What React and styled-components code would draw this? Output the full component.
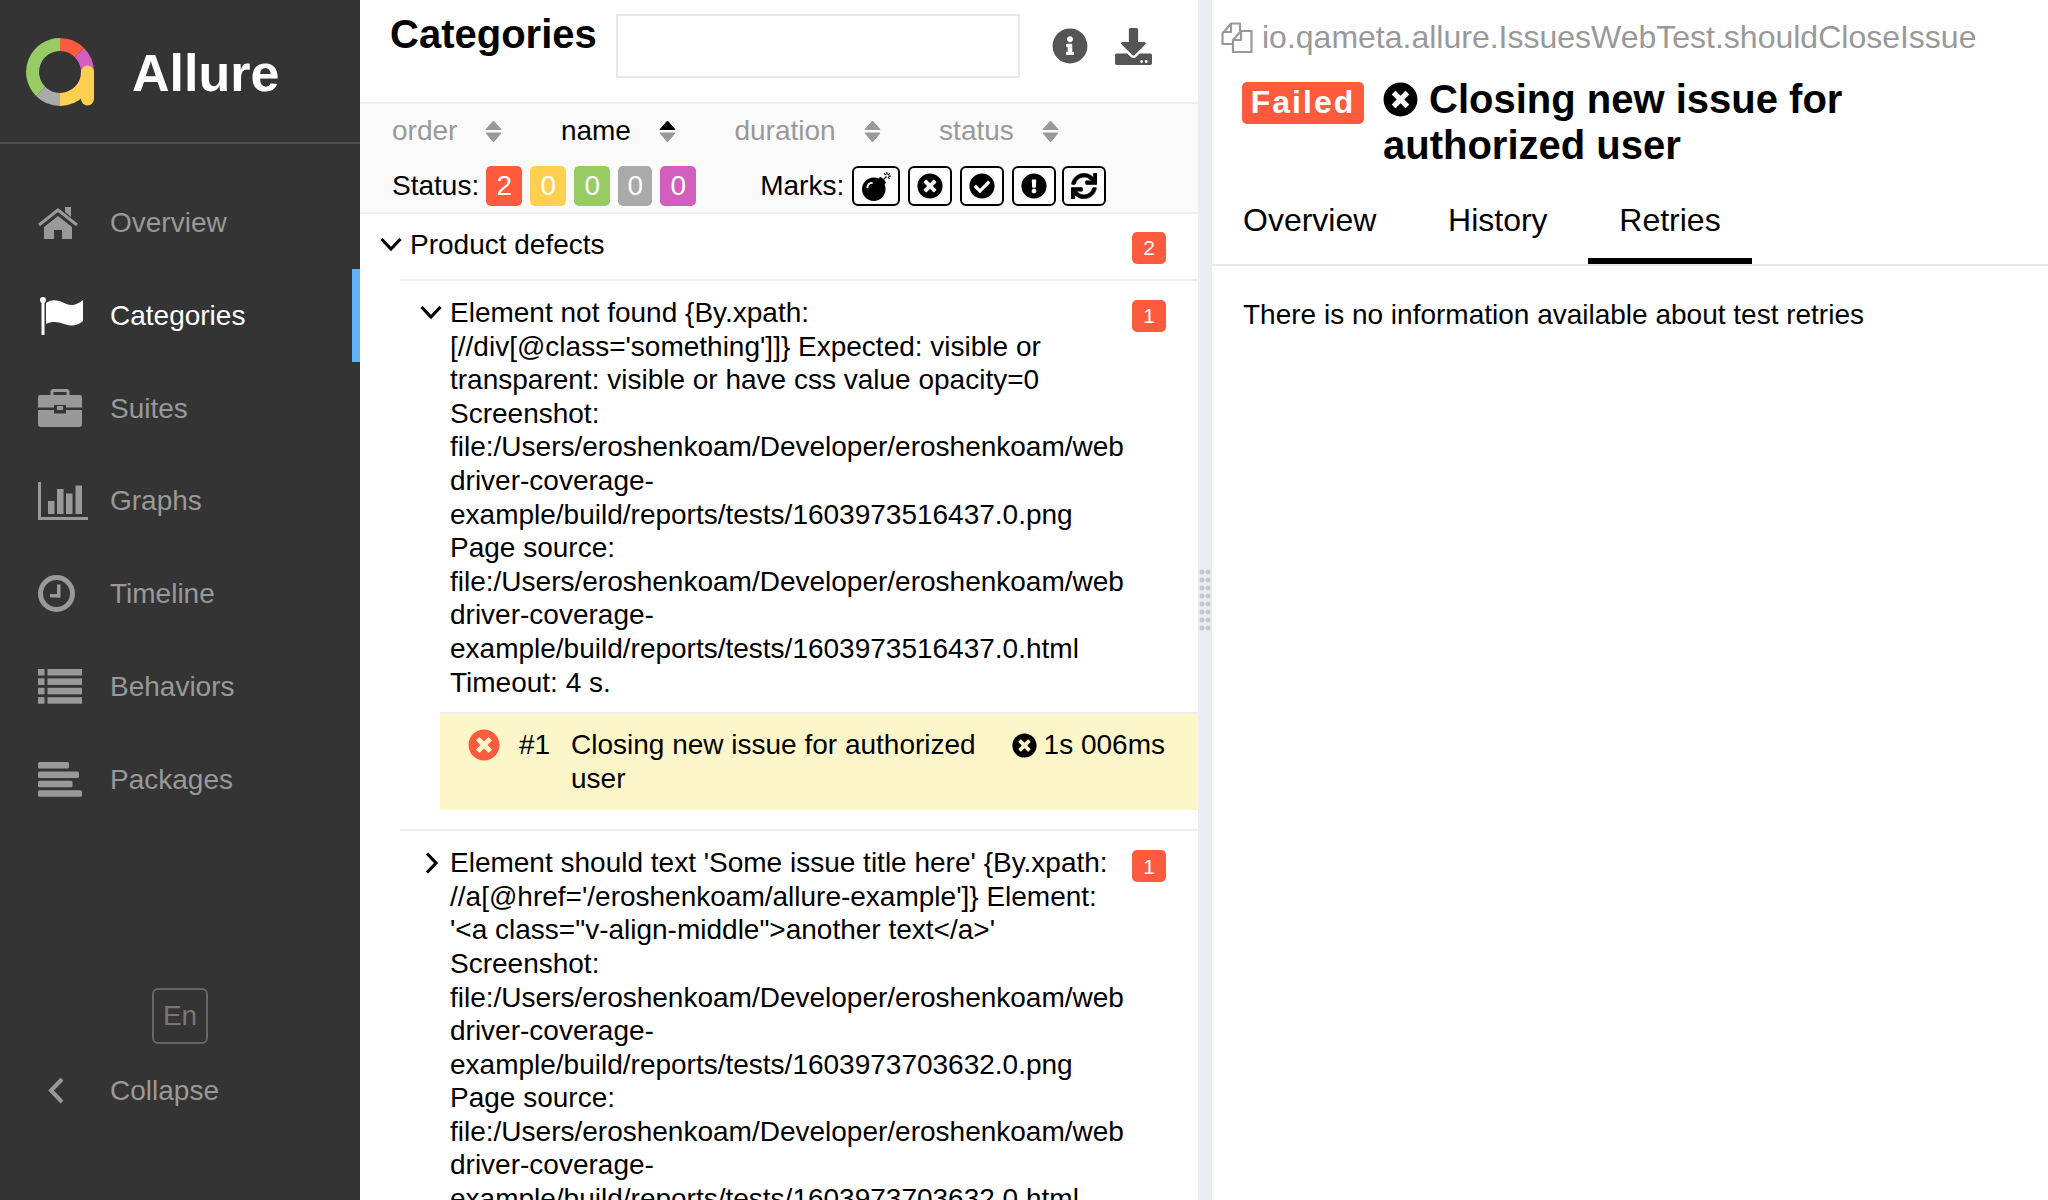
import React from "react";
import styled, { createGlobalStyle } from "styled-components";
import {
  FaBomb,
  FaCheckCircle,
  FaDownload,
  FaExclamationCircle,
  FaInfoCircle,
  FaSync,
  FaTimesCircle,
} from "react-icons/fa";

const RED = "#fd5a3e";

const GlobalStyle = createGlobalStyle`
  html, body {
    margin: 0;
    height: 100%;
    overflow: hidden;
    background: #fff;
  }
  body {
    font-family: "Liberation Sans", Arial, sans-serif;
    font-size: 28px;
    line-height: 1.2;
    color: #000;
  }
`;

const Page = styled.div`
  display: flex;
  width: 2048px;
  height: 1200px;
  overflow: hidden;
`;

/* sidebar */
const Side = styled.aside`
  flex: 0 0 360px;
  display: flex;
  flex-direction: column;
  background: #343434;
  color: #999;
`;
const Brand = styled.div`
  display: flex;
  align-items: center;
  box-sizing: border-box;
  height: 144px;
  padding: 4px 0 0 26px;
  border-bottom: 2px solid #4d4d4d;
`;
const BrandName = styled.span`
  margin-left: 36px;
  font-size: 52px;
  font-weight: 700;
  color: #fff;
`;
const Nav = styled.nav`
  padding-top: 32.4px;
`;
const NavRow = styled.div`
  display: flex;
  align-items: center;
  height: 92.8px;
  padding-left: 38px;
  color: ${(p) => (p.$active ? "#fff" : "#999")};
  border-right: 8px solid ${(p) => (p.$active ? "#5fb3f6" : "transparent")};
`;
const NavIcon = styled.span`
  display: flex;
  align-items: center;
  flex: 0 0 72px;
  svg {
    display: block;
    fill: currentColor;
  }
`;
const SideFoot = styled.div`
  margin-top: auto;
  padding-bottom: 63px;
`;
const LangBtn = styled.div`
  display: flex;
  align-items: center;
  justify-content: center;
  box-sizing: border-box;
  width: 56px;
  height: 56px;
  margin: 0 auto 0;
  border: 2px solid #666;
  border-radius: 6px;
  color: #777;
`;
const CollapseRow = styled(NavRow)`
  height: 93px;
`;

/* categories list */
const Middle = styled.section`
  flex: 0 0 838px;
  display: flex;
  flex-direction: column;
  overflow: hidden;
`;
const Head = styled.header`
  display: flex;
  height: 102px;
  box-sizing: border-box;
  padding: 14px 0 0 30px;
`;
const PageTitle = styled.h2`
  margin: -4px 0 0;
  font-size: 40px;
  line-height: 48px;
  font-weight: 700;
`;
const Search = styled.div`
  box-sizing: border-box;
  width: 404px;
  height: 64px;
  margin-left: 19px;
  border: 2px solid #e8e8e8;
`;
const HeadIcons = styled.div`
  display: flex;
  align-items: center;
  height: 64px;
  margin-left: 32px;
  gap: 27px;
  color: #555;
`;
const Filters = styled.div`
  box-sizing: border-box;
  height: 112px;
  padding-left: 32px;
  background: #fafafa;
  border-top: 2px solid #eee;
  border-bottom: 2px solid #eee;
`;
const SortRow = styled.div`
  display: flex;
  align-items: center;
  height: 50px;
  margin-top: 2px;
  gap: 58.5px;
`;
const SortItem = styled.div`
  display: flex;
  align-items: center;
  gap: 28px;
  color: ${(p) => (p.$active ? "#000" : "#999")};
`;
const StatusRow = styled.div`
  display: flex;
  align-items: center;
  height: 40px;
  margin-top: 10px;
`;
const Badge = styled.span`
  display: flex;
  align-items: center;
  justify-content: center;
  box-sizing: border-box;
  width: ${(p) => p.$w || 36}px;
  height: 40px;
  margin-left: ${(p) => p.$ml || 8}px;
  border-radius: 5px;
  color: #fff;
  background: ${(p) => p.$bg};
`;
const MarksLabel = styled.span`
  margin-left: 64px;
  margin-right: 2px;
`;
const Mark = styled.span`
  display: flex;
  align-items: center;
  justify-content: center;
  box-sizing: border-box;
  width: ${(p) => p.$w || 44}px;
  height: 40px;
  margin-left: ${(p) => (p.$ml === undefined ? 8 : p.$ml)}px;
  border: 2px solid #000;
  border-radius: 6px;
  background: #fff;
`;

const Tree = styled.div`
  flex: 1;
  overflow: hidden;
`;
const GroupRow = styled.div`
  display: flex;
  align-items: flex-start;
  padding: ${(p) => p.$pt}px 32px ${(p) => p.$pb}px 20px;
  margin-left: ${(p) => (p.$top ? "0" : "40px")};
  margin-top: ${(p) => p.$mt || 0}px;
  border-top: ${(p) => (p.$top ? "none" : "2px solid #eee")};
`;
const Arrow = styled.span`
  flex: 0 0 30px;
  height: 33.6px;
  display: flex;
  align-items: center;
`;
const GroupName = styled.div`
  flex: 1;
  min-width: 0;
  white-space: pre-line;
  overflow-wrap: break-word;
`;
const Count = styled.span`
  flex: 0 0 34px;
  display: flex;
  align-items: center;
  justify-content: center;
  height: 32px;
  margin-top: 4px;
  border-radius: 5px;
  background: ${RED};
  color: #fff;
  font-size: 21px;
`;
const TestRow = styled.div`
  display: flex;
  align-items: flex-start;
  box-sizing: border-box;
  height: 98px;
  margin-left: 80px;
  padding: 14px 33px 0 28px;
  background: #fdf6c8;
  border-top: 2px solid #eee;
`;
const TestStatus = styled.span`
  flex: 0 0 47px;
  height: 34px;
  display: flex;
  align-items: center;
  color: ${RED};
`;
const TestNum = styled.span`
  flex: 0 0 52px;
  margin-left: 4px;
`;
const TestName = styled.span`
  flex: 1;
`;
const TestTime = styled.span`
  display: flex;
  align-items: center;
  gap: 7px;
  height: 34px;
  margin-left: 30px;
`;

const Gutter = styled.div`
  flex: 0 0 14px;
  display: flex;
  align-items: center;
  justify-content: center;
  background: #eaeef1;
`;
const Grip = styled.div`
  width: 12px;
  height: 64px;
  background-image: radial-gradient(circle, #c4c9cc 2.2px, transparent 2.8px);
  background-size: 6px 8px;
`;

/* test result pane */
const Detail = styled.section`
  flex: 1;
  min-width: 0;
`;
const PathRow = styled.div`
  display: flex;
  align-items: center;
  gap: 9px;
  height: 38px;
  padding: 18px 0 0 9px;
  font-size: 32px;
  color: #999;
`;
const TitleRow = styled.div`
  display: flex;
  align-items: flex-start;
  padding: 20px 32px 0 30px;
`;
const StateTag = styled.span`
  flex: 0 0 122px;
  display: flex;
  align-items: center;
  justify-content: center;
  box-sizing: border-box;
  height: 42px;
  margin-top: 6px;
  padding-bottom: 2px;
  border-radius: 5px;
  background: ${RED};
  color: #fff;
  font-size: 32px;
  font-weight: 700;
  letter-spacing: 2px;
`;
const TestTitle = styled.h2`
  margin: 0 0 0 19px;
  font-size: 40px;
  line-height: 46px;
  font-weight: 700;
  svg {
    vertical-align: -4px;
    margin-right: 11px;
  }
`;
const Tabs = styled.div`
  display: flex;
  height: 75px;
  margin-top: 21px;
  border-bottom: 2px solid #e8e8e8;
  font-size: 32px;
`;
const Tab = styled.div`
  box-sizing: border-box;
  height: 75px;
  padding: 12px 31px 0;
  margin-right: 9.7px;
  border-bottom: 6px solid ${(p) => (p.$active ? "#000" : "transparent")};
`;
const Empty = styled.p`
  margin: 0;
  padding: 32px 31px;
`;
const FlagBox = styled.span`
  display: block;
  margin-left: 2px;
`;
const HeavySync = styled(FaSync)`
  stroke: currentColor;
  stroke-width: 14px;
`;

/* drawings */
const Logo = () => (
  <svg width="70" height="70" viewBox="0 0 70 70">
    <g fill="none" strokeWidth="13">
      <path d="M34 6.5A27.5 27.5 0 0 1 53.4 14.6" stroke="#fd5a3e" />
      <path d="M53.4 14.6A27.5 27.5 0 0 1 61.5 34" stroke="#d35ebe" />
      <path d="M61.5 34A27.5 27.5 0 0 1 34 61.5" stroke="#ffd050" />
      <path d="M34 61.5A27.5 27.5 0 0 1 14.6 53.4" stroke="#aaa" />
      <path d="M14.6 53.4A27.5 27.5 0 0 1 34 6.5" stroke="#97cc64" />
      <path d="M61.5 34V61" stroke="#ffd050" strokeLinecap="round" />
    </g>
    <rect x="55" y="34" width="13" height="8" fill="#ffd050" />
  </svg>
);

const HomeIcon = () => (
  <svg width="40" height="32" viewBox="0 0 40 32">
    <path d="M27 0h6v10l-6-5z" />
    <path d="M6 20L20 9l14 11v12H24v-9h-8v9H6z" />
    <path d="M1 18L20 3l19 15" fill="none" stroke="currentColor" strokeWidth="3" />
  </svg>
);
const FlagIcon = () => (
  <FlagBox>
    <svg width="44" height="38" viewBox="0 0 44 38">
      <circle cx="3" cy="3" r="3" />
      <rect x="1.5" y="3" width="3" height="35" />
      <path d="M6 6C12 2 18 3 24 6C30 9 36 9 43 3V24C36 30 30 29 24 27C18 25 12 24 6 27Z" />
    </svg>
  </FlagBox>
);
const SuitesIcon = () => (
  <svg width="44" height="38" viewBox="0 0 44 38">
    <path d="M14 8V3a1.5 1.5 0 0 1 1.5-1.5h13A1.5 1.5 0 0 1 30 3v5" fill="none" stroke="currentColor" strokeWidth="3" />
    <path d="M2 6h40a2 2 0 0 1 2 2v10.500H28V16H16v2.500H0V8a2 2 0 0 1 2-2z" />
    <path d="M0 21h16v3.500h12V21h16v14a3 3 0 0 1-3 3H3a3 3 0 0 1-3-3z" />
    <rect x="19" y="17" width="6" height="4" />
  </svg>
);
const GraphsIcon = () => (
  <svg width="50" height="38" viewBox="0 0 50 38">
    <rect x="0" y="0" width="3" height="38" />
    <rect x="0" y="35" width="50" height="3" />
    <rect x="10" y="19" width="6.500" height="13" />
    <rect x="19" y="7" width="6.500" height="25" />
    <rect x="28" y="11.500" width="6.500" height="20.500" />
    <rect x="37.500" y="3.500" width="6.500" height="28.500" />
  </svg>
);
const TimeIcon = () => (
  <svg width="38" height="38" viewBox="0 0 38 38">
    <circle cx="18.500" cy="18.500" r="16" fill="none" stroke="currentColor" strokeWidth="5" />
    <rect x="19" y="9.500" width="3.500" height="13" />
    <rect x="12" y="19" width="10" height="3.500" />
  </svg>
);
const ListIcon = () => (
  <svg width="44" height="35" viewBox="0 0 44 35">
    {[0, 9.4, 18.8, 28.2].map((y) => (
      <g key={y}>
        <rect x="0" y={y} width="6.500" height="6.500" />
        <rect x="9.500" y={y} width="34.500" height="6.500" />
      </g>
    ))}
  </svg>
);
const PackagesIcon = () => (
  <svg width="44" height="35" viewBox="0 0 44 35">
    {[31, 41, 34.5, 44].map((w, i) => (
      <rect key={i} x="0" y={i * 9.4} width={w} height="6.500" rx="1.500" />
    ))}
  </svg>
);
const AngleLeft = () => (
  <svg width="28" height="26" viewBox="0 0 28 26">
    <path d="M24 1L13 12.500l11 11.500" fill="none" stroke="currentColor" strokeWidth="4" />
  </svg>
);
const SortIcon = ({ up }) => (
  <svg width="17" height="23" viewBox="0 0 17 23">
    <path d="M8.500 1L16 9.500H1z" fill={up ? "#000" : "#999"} stroke={up ? "#000" : "#999"} strokeLinejoin="round" />
    <path d="M1 13h15l-7.500 9z" fill="#999" stroke="#999" strokeLinejoin="round" />
  </svg>
);
const ChevronDown = () => (
  <svg width="22" height="15" viewBox="0 0 22 15">
    <path d="M1.500 2L11 12l9.500-10" fill="none" stroke="#000" strokeWidth="3.200" />
  </svg>
);
const ChevronRight = () => (
  <svg width="22" height="22" viewBox="0 0 22 22">
    <path d="M7 1.500l9 9.500-9 9.500" fill="none" stroke="#000" strokeWidth="3.200" />
  </svg>
);
const CopyIcon = () => (
  <svg width="32" height="31" viewBox="0 0 32 31" fill="none" stroke="#999" strokeWidth="2.200" strokeLinejoin="round">
    <path d="M11 22H1.500V11.500L10 1.500h9V9" />
    <path d="M10 1.500V10H1.500" />
    <path d="M12 30V18l8-9h10.500v21z" />
    <path d="M20 9.500V18h-8" />
  </svg>
);

const firstError = `Element not found {By.xpath: [//div[@class='something']]} Expected: visible or transparent: visible or have css value opacity=0
Screenshot: file:/Users/eroshenkoam/Developer/eroshenkoam/webdriver-coverage-example/build/reports/tests/1603973516437.0.png
Page source: file:/Users/eroshenkoam/Developer/eroshenkoam/webdriver-coverage-example/build/reports/tests/1603973516437.0.html
Timeout: 4 s.`;

const secondError = `Element should text 'Some issue title here' {By.xpath: //a[@href='/eroshenkoam/allure-example']} Element: '<a class="v-align-middle">another text</a>'
Screenshot: file:/Users/eroshenkoam/Developer/eroshenkoam/webdriver-coverage-example/build/reports/tests/1603973703632.0.png
Page source: file:/Users/eroshenkoam/Developer/eroshenkoam/webdriver-coverage-example/build/reports/tests/1603973703632.0.html
Timeout: 4 s.`;

const navItems = [
  ["Overview", <HomeIcon />],
  ["Categories", <FlagIcon />, true],
  ["Suites", <SuitesIcon />],
  ["Graphs", <GraphsIcon />],
  ["Timeline", <TimeIcon />],
  ["Behaviors", <ListIcon />],
  ["Packages", <PackagesIcon />],
];

const App = () => {
  return (
    <Page>
      <GlobalStyle />
      <Side>
        <Brand>
          <Logo />
          <BrandName>Allure</BrandName>
        </Brand>
        <Nav>
          {navItems.map(([label, icon, active]) => (
            <NavRow key={label} $active={active}>
              <NavIcon>{icon}</NavIcon>
              {label}
            </NavRow>
          ))}
        </Nav>
        <SideFoot>
          <LangBtn>En</LangBtn>
          <CollapseRow>
            <NavIcon>
              <AngleLeft />
            </NavIcon>
            Collapse
          </CollapseRow>
        </SideFoot>
      </Side>

      <Middle>
        <Head>
          <PageTitle>Categories</PageTitle>
          <Search />
          <HeadIcons>
            <FaInfoCircle size={36} />
            <FaDownload size={37} />
          </HeadIcons>
        </Head>
        <Filters>
          <SortRow>
            <SortItem>
              order <SortIcon />
            </SortItem>
            <SortItem $active>
              name <SortIcon up />
            </SortItem>
            <SortItem>
              duration <SortIcon />
            </SortItem>
            <SortItem>
              status <SortIcon />
            </SortItem>
          </SortRow>
          <StatusRow>
            Status:
            <Badge $bg="#fd5a3e" $ml={7}>2</Badge>
            <Badge $bg="#ffd050">0</Badge>
            <Badge $bg="#97cc64">0</Badge>
            <Badge $bg="#aaa" $w={34}>0</Badge>
            <Badge $bg="#d35ebe">0</Badge>
            <MarksLabel>Marks:</MarksLabel>
            <Mark $w={48} $ml={6}><FaBomb size={29} /></Mark>
            <Mark><FaTimesCircle size={26} /></Mark>
            <Mark><FaCheckCircle size={26} /></Mark>
            <Mark><FaExclamationCircle size={26} /></Mark>
            <Mark $ml={6}><HeavySync size={26} /></Mark>
          </StatusRow>
        </Filters>
        <Tree>
          <GroupRow $top $pt={14} $pb={15}>
            <Arrow><ChevronDown /></Arrow>
            <GroupName>Product defects</GroupName>
            <Count>2</Count>
          </GroupRow>
          <GroupRow $pt={15} $pb={13}>
            <Arrow><ChevronDown /></Arrow>
            <GroupName>{firstError}</GroupName>
            <Count>1</Count>
          </GroupRow>
          <TestRow>
            <TestStatus><FaTimesCircle size={32} /></TestStatus>
            <TestNum>#1</TestNum>
            <TestName>Closing new issue for authorized user</TestName>
            <TestTime>
              <FaTimesCircle size={25} />
              1s 006ms
            </TestTime>
          </TestRow>
          <GroupRow $mt={19} $pt={15} $pb={14}>
            <Arrow><ChevronRight /></Arrow>
            <GroupName>{secondError}</GroupName>
            <Count>1</Count>
          </GroupRow>
        </Tree>
      </Middle>

      <Gutter>
        <Grip />
      </Gutter>

      <Detail>
        <PathRow>
          <CopyIcon />
          io.qameta.allure.IssuesWebTest.shouldCloseIssue
        </PathRow>
        <TitleRow>
          <StateTag>Failed</StateTag>
          <TestTitle>
            <FaTimesCircle size={35} />
            Closing new issue for authorized user
          </TestTitle>
        </TitleRow>
        <Tabs>
          <Tab>Overview</Tab>
          <Tab>History</Tab>
          <Tab $active>Retries</Tab>
        </Tabs>
        <Empty>There is no information available about test retries</Empty>
      </Detail>
    </Page>
  );
};

export default App;
